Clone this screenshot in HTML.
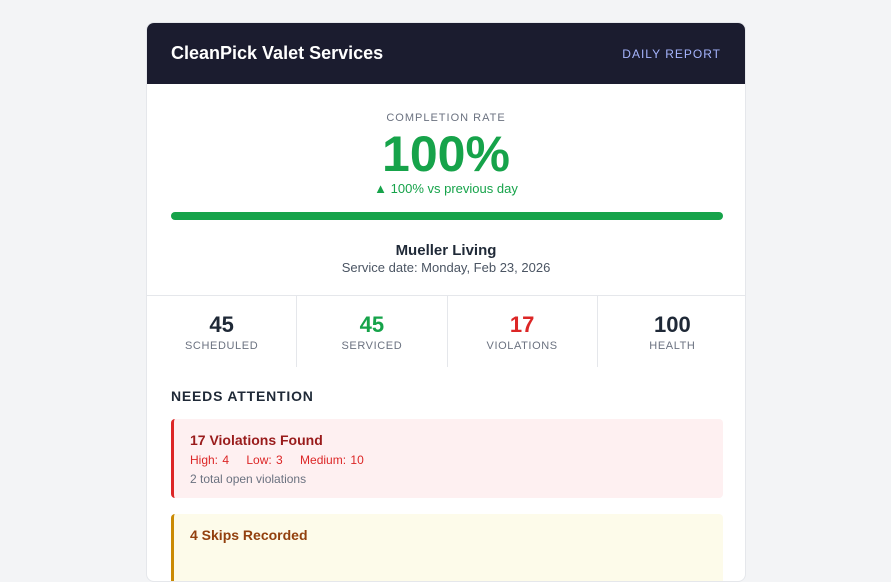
<!DOCTYPE html>
<html><head><style>
*{box-sizing:border-box;margin:0;padding:0}
html,body{width:891px;height:541px;overflow:hidden}
body{background:#f3f4f6;font-family:"Liberation Sans",Arial,sans-serif}
.card{position:absolute;left:146px;top:22px;width:600px;height:560px;background:#fff;border-radius:8px;overflow:hidden;border:1px solid #e5e7eb}
.hdr{height:61px;background:#1b1c2f;display:flex;align-items:center;justify-content:space-between;padding:0 24px}
.hdr h1{color:#fff;font-size:18px;font-weight:bold}
.hdr span{color:#a5b4fc;font-size:12px;letter-spacing:1px}
.lbl{position:absolute;width:100%;text-align:center}
.stats{position:absolute;top:272px;left:0;width:600px;height:72px;border-top:1px solid #e5e7eb;display:flex}
.stats div{flex:1;text-align:center;border-right:1px solid #e5e7eb;padding-top:18px}
.stats div:last-child{border-right:none}
.stats b{display:block;font-size:22px;color:#1f2937;line-height:22px}
.stats span{display:block;font-size:11px;color:#6b7280;letter-spacing:.6px;margin-top:4px}
.box{position:absolute;left:24px;width:552px;border-radius:4px}
</style></head><body>
<div class="card">
<div class="hdr"><h1>CleanPick Valet Services</h1><span>DAILY REPORT</span></div>
<div class="lbl" style="top:89px;font-size:11px;color:#6b7280;letter-spacing:1px">COMPLETION RATE</div>
<div class="lbl" style="top:103px;font-size:50px;font-weight:bold;color:#16a34a;line-height:56px">100%</div>
<div class="lbl" style="top:158px;font-size:13px;color:#16a34a">▲ 100% vs previous day</div>
<div style="position:absolute;left:24px;top:189px;width:552px;height:8px;background:#16a34a;border-radius:4px"></div>
<div class="lbl" style="top:219px;font-size:15px;font-weight:bold;color:#1f2937">Mueller Living</div>
<div class="lbl" style="top:237px;font-size:13px;color:#4b5563">Service date: Monday, Feb 23, 2026</div>
<div class="stats">
<div><b>45</b><span>SCHEDULED</span></div>
<div><b style="color:#16a34a">45</b><span>SERVICED</span></div>
<div><b style="color:#dc2626">17</b><span>VIOLATIONS</span></div>
<div><b>100</b><span>HEALTH</span></div>
</div>
<div style="position:absolute;left:24px;top:365px;font-size:14px;font-weight:bold;color:#1f2937;letter-spacing:.8px">NEEDS ATTENTION</div>
<div class="box" style="top:396px;height:79px;background:#fef0f1;border-left:3px solid #dc2626;padding:13px 16px">
<div style="font-size:14px;font-weight:bold;color:#991b1b">17 Violations Found</div>
<div style="font-size:12px;color:#dc2626;margin-top:5px;word-spacing:1px">High: 4 &nbsp;&nbsp; Low: 3 &nbsp;&nbsp; Medium: 10</div>
<div style="font-size:12px;color:#6b7280;margin-top:5px">2 total open violations</div>
</div>
<div class="box" style="top:491px;height:80px;background:#fdfbea;border-left:3px solid #ca8a04;padding:13px 16px">
<div style="font-size:14px;font-weight:bold;color:#92400e">4 Skips Recorded</div>
</div>
</div>
</body></html>
